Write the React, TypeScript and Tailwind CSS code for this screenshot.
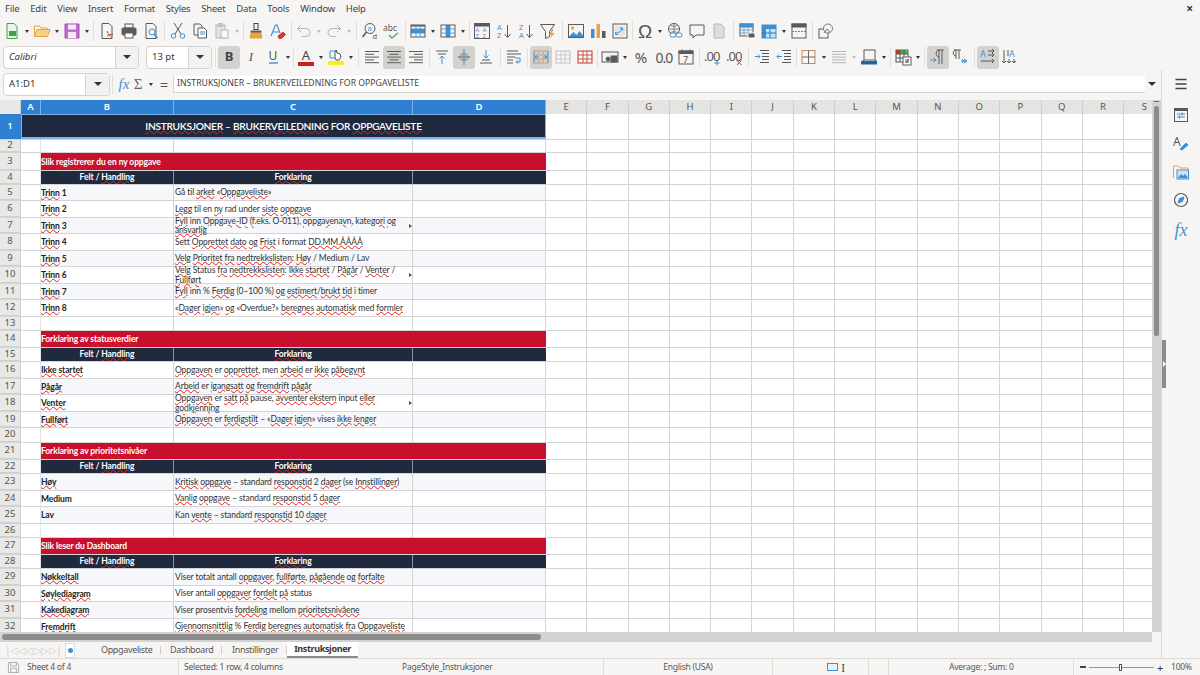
import type { ReactNode } from 'react';

const BLUE = '#3f8fd2';
const GREY = '#5a5a5a';
const RED = '#d9382e';
const ORANGE = '#e8a33d';

function Ico({ children, size = 18 }: { children: ReactNode; size?: number }) {
  return (
    <svg width={size} height={size} viewBox="0 0 18 18" fill="none" stroke={GREY} strokeWidth="1">
      {children}
    </svg>
  );
}

function Tool({ children, active, dim }: { children: ReactNode; active?: boolean; dim?: boolean }) {
  return (
    <div className={`w-[22px] h-[23px] flex items-center justify-center rounded-[3px] shrink-0 ${active ? 'bg-[#d4d2cf]' : ''} ${dim ? 'opacity-40' : ''}`}>
      {children}
    </div>
  );
}

function Caret({ dim }: { dim?: boolean }) {
  return (
    <div className="w-[8px] h-[23px] flex items-center justify-center shrink-0">
      <div className={`border-t-[3px] border-x-[2.5px] border-x-transparent ${dim ? 'border-t-[#bbbbbb]' : 'border-t-[#333333]'}`} />
    </div>
  );
}

function Sep({ w }: { w: string }) {
  return (
    <div className={`${w} h-[20px] flex justify-center shrink-0`}>
      <div className="w-px h-full bg-[#e2e0dd]" />
    </div>
  );
}

const GridIcon = ({ fill, stroke = BLUE }: { fill?: 'row' | 'col'; stroke?: string }) => (
  <Ico>
    {fill === 'row' && <rect x="2" y="7" width="14" height="4" fill={stroke} stroke="none" />}
    {fill === 'col' && <rect x="7" y="3" width="4" height="12" fill={stroke} stroke="none" />}
    <rect x="2" y="3" width="14" height="12" stroke={fill ? GREY : stroke} />
    {fill === 'row' && <rect x="2" y="3" width="14" height="1.5" fill={GREY} stroke="none" />}
    <path d="M2 7h14M2 11h14M7 3v12M11 3v12" stroke={stroke} strokeWidth=".8" />
  </Ico>
);

const Lines = ({ rows }: { rows: [number, number][] }) => (
  <Ico>
    {rows.map(([x, w], i) => (
      <path key={i} d={`M${x} ${3.5 + i * 2.8}h${w}`} stroke={GREY} />
    ))}
  </Ico>
);

const Toolbar1 = () => (
  <div className="h-[26px] flex items-center pl-px">
    <Tool><Ico><path d="M4 1.5h7l3 3v12H4z" stroke="#43a047" fill="#eaf5ea" /><rect x="6" y="9" width="7" height="5" fill="#43a047" stroke="none" /></Ico></Tool>
    <Caret />
    <Tool><Ico><path d="M1.5 14.5V4h5l1.5 2h6v2" stroke={ORANGE} /><path d="M1.5 14.5l2.5-7h13l-2.5 7z" fill="#f6cf8c" stroke={ORANGE} /></Ico></Tool>
    <Caret />
    <Tool><Ico><path d="M2 2h14v14H2z" fill="#c06fce" stroke="#a24fb2" /><rect x="5" y="2.5" width="8" height="5" fill="#f6e8f8" stroke="none" /><rect x="5" y="10" width="8" height="6" fill="#f6e8f8" stroke="none" /></Ico></Tool>
    <Caret />
    <Sep w="w-[5px]" />
    <Tool><Ico><path d="M4 1.5h7l3 3v12H4z" /><path d="M9 9c1 3 3 5 5 6M9 14c2-1 4-2 6-2" stroke={RED} /></Ico></Tool>
    <Tool><Ico><rect x="5" y="2" width="8" height="4" /><rect x="2" y="6" width="14" height="7" rx="1" fill={GREY} /><rect x="5" y="11" width="8" height="5" fill="#fff" /></Ico></Tool>
    <Tool><Ico><path d="M4 1.5h7l3 3v12H4z" /><circle cx="10" cy="10" r="3" stroke={BLUE} /><path d="M12 12l3.5 4" stroke={BLUE} strokeWidth="1.5" /></Ico></Tool>
    <Sep w="w-[5px]" />
    <Tool><Ico><path d="M5 1l7 11M13 1L6 12" /><circle cx="4.5" cy="14" r="2.3" stroke={BLUE} /><circle cx="13.5" cy="14" r="2.3" stroke={BLUE} /></Ico></Tool>
    <Tool><Ico><path d="M3 2h6l2 2v9H3z" /><path d="M7 6h6l2.5 2v8H7z" fill="#fff" /><path d="M9 10h5M9 12h5" stroke={BLUE} /></Ico></Tool>
    <Tool dim><Ico><rect x="3" y="3" width="9" height="13" fill="#ccc" /><rect x="6" y="1.5" width="3" height="3" /><rect x="8" y="8" width="7" height="8" fill="#fff" /></Ico></Tool>
    <Caret dim />
    <Sep w="w-[4px]" />
    <Tool><Ico><rect x="7" y="1.5" width="4" height="6" stroke="#444" /><path d="M4 9h10v1.5H4z" fill="#666" /><path d="M4 11h10l1 5H3z" fill={ORANGE} stroke={ORANGE} /></Ico></Tool>
    <Tool><Ico><path d="M2 14L6.5 3h1.5l3 8M4 10h6" stroke={BLUE} strokeWidth="1.2" /><path d="M9 14l5-4 2.5 2.5-4 4H10z" fill={RED} stroke={RED} /></Ico></Tool>
    <Sep w="w-[4px]" />
    <Tool dim><Ico><path d="M6 3L2.5 6.5 6 10" /><path d="M3 6.5h8a4 4 0 010 8H7" /></Ico></Tool>
    <Caret dim />
    <Tool dim><Ico><path d="M12 3l3.5 3.5L12 10" /><path d="M15 6.5H7a4 4 0 000 8h4" /></Ico></Tool>
    <Caret dim />
    <Sep w="w-[6px]" />
    <Tool><Ico><circle cx="9" cy="6.5" r="5" /><path d="M5.5 10L1.5 15" strokeWidth="1.6" /><text x="6.5" y="9" fontSize="7.5" fill={BLUE} stroke="none" fontFamily="Noto Sans">a</text><text x="11.5" y="17" fontSize="7.5" fill={GREY} stroke="none" fontFamily="Noto Sans">d</text></Ico></Tool>
    <Tool><Ico><text x="0" y="9" fontSize="8.5" fill={GREY} stroke="none" fontFamily="Noto Sans">abc</text><path d="M6 13l3 3 6-5" stroke="#4caf50" strokeWidth="1.4" /></Ico></Tool>
    <Sep w="w-[4px]" />
    <Tool><GridIcon fill="row" /></Tool>
    <Caret />
    <Tool><GridIcon fill="col" /></Tool>
    <Caret />
    <Sep w="w-[4px]" />
    <Tool><Ico><rect x="1.5" y="1.5" width="15" height="15" /><rect x="1.5" y="1.5" width="15" height="2.5" fill={GREY} /><text x="2.5" y="10" fontSize="6" fill="#b65fc4" stroke="none" fontFamily="Noto Sans">A</text><text x="9.5" y="10" fontSize="6" fill={BLUE} stroke="none" fontFamily="Noto Sans">A</text><text x="2.5" y="16" fontSize="6" fill={BLUE} stroke="none" fontFamily="Noto Sans">Z</text><text x="9.5" y="16" fontSize="6" fill="#b65fc4" stroke="none" fontFamily="Noto Sans">Z</text></Ico></Tool>
    <Tool><Ico><text x="2" y="8" fontSize="7.5" fill={BLUE} stroke="none" fontFamily="Noto Sans">A</text><text x="2" y="16" fontSize="7.5" fill="#b65fc4" stroke="none" fontFamily="Noto Sans">Z</text><path d="M12.5 3v12M9.5 12l3 3.5 3-3.5" /></Ico></Tool>
    <Tool><Ico><text x="2" y="8" fontSize="7.5" fill="#b65fc4" stroke="none" fontFamily="Noto Sans">Z</text><text x="2" y="16" fontSize="7.5" fill={BLUE} stroke="none" fontFamily="Noto Sans">A</text><path d="M12.5 3v12M9.5 12l3 3.5 3-3.5" /></Ico></Tool>
    <Tool><Ico><path d="M1.5 2.5h14l-5 7v5l-4 2v-7z" /><path d="M13 7l-3 6h2.5L11 17l4.5-6H13l1.5-4z" fill={ORANGE} stroke="none" /></Ico></Tool>
    <Sep w="w-[6px]" />
    <Tool><Ico><rect x="1.5" y="2.5" width="15" height="13" /><circle cx="5.5" cy="6" r="1.7" fill={ORANGE} stroke="none" /><path d="M1.5 15l5-5 3 3 3-4 4 5v1z" fill={BLUE} stroke="none" /></Ico></Tool>
    <Tool><Ico><rect x="2" y="7" width="3.5" height="9" fill={BLUE} stroke="none" /><rect x="7.5" y="2" width="3.5" height="14" fill={ORANGE} stroke="none" /><rect x="13" y="9" width="3.5" height="7" fill={GREY} stroke="none" /></Ico></Tool>
    <Tool><Ico><rect x="2" y="2" width="14" height="14" /><rect x="4" y="4" width="10" height="10" fill="#e4e4e4" stroke="none" /><path d="M5 11c3 0 5-2 6-5M9 6h2.5v2.5M7 12.5H4.5V10" stroke={BLUE} /></Ico></Tool>
    <Sep w="w-[3px]" />
    <Tool><span className="text-[19px] leading-none text-[#555555] font-['Liberation_Sans',sans-serif]">Ω</span></Tool>
    <Caret />
    <Tool><Ico><circle cx="8" cy="7" r="5.5" /><path d="M2.5 7h11M8 1.5v11M4.5 3.5c2 1 5 1 7 0M4.5 10.5c2-1 5-1 7 0" strokeWidth=".7" /><rect x="4" y="11" width="6" height="4" rx="2" stroke={BLUE} fill="#fff" /><rect x="10" y="11" width="6" height="4" rx="2" stroke={BLUE} fill="#fff" /></Ico></Tool>
    <Tool><Ico><path d="M2 3h14v10H8l-3 3v-3H2z" /></Ico></Tool>
    <Tool dim><Ico><path d="M4 2h7l3 3v11H4z" fill="#bbb" /></Ico></Tool>
    <Sep w="w-[6px]" />
    <Tool><Ico><rect x="2" y="2" width="13" height="12" /><rect x="2" y="2" width="13" height="3" fill={BLUE} stroke={BLUE} /><path d="M2 8h13M2 11h13M6 5v9M10 5v9" stroke={BLUE} strokeWidth=".7" /><rect x="10" y="11" width="7" height="5" rx="1" fill={GREY} stroke="#fff" /></Ico></Tool>
    <Tool><Ico><rect x="2" y="3" width="14" height="13" fill="#c9e1f3" stroke={BLUE} /><rect x="2" y="3" width="4" height="13" fill={BLUE} stroke="none" /><rect x="2" y="3" width="14" height="4" fill={BLUE} stroke="none" /><path d="M2 11h14M10 7v9" stroke="#277fb4" /></Ico></Tool>
    <Caret />
    <Tool><Ico><rect x="2" y="2" width="14" height="14" /><rect x="2" y="2" width="14" height="3" fill={GREY} /><path d="M2 9.5h14" stroke={BLUE} strokeDasharray="2 1" /></Ico></Tool>
    <Sep w="w-[5px]" />
    <Tool><Ico><rect x="2" y="7" width="9" height="9" /><circle cx="11" cy="6.5" r="4.5" stroke="#777" fill="#f6f5f4" /><path d="M7 11l3-4 3 3" stroke="#777" /></Ico></Tool>
  </div>
);

const Dropdown = ({ label, italic, w, btn }: { label: string; italic?: boolean; w: string; btn: string }) => (
  <div className={`${w} h-[23px] flex bg-white border border-[#d6d4d1] rounded-[4px] overflow-hidden shrink-0`}>
    <div className={`flex-1 flex items-center pl-[5px] text-[9.5px] text-[#333333] ${italic ? 'italic' : ''}`}>{label}</div>
    <div className={`${btn} flex items-center justify-center bg-[#f3f2f0] border-l border-[#d6d4d1]`}>
      <div className="border-t-[4px] border-x-[4px] border-x-transparent border-t-[#333333]" />
    </div>
  </div>
);

const Toolbar2 = () => (
  <div className="h-[26px] flex items-center pl-[3px]">
    <Dropdown label="Calibri" italic w="w-[136px]" btn="w-[23px]" />
    <div className="w-[7px]" />
    <Dropdown label="13 pt" w="w-[66px]" btn="w-[23px]" />
    <Sep w="w-[6px]" />
    <Tool active><span className="text-[13px] font-bold text-[#444444]">B</span></Tool>
    <Tool><span className="text-[13px] italic text-[#555555] font-['Liberation_Serif',serif]">I</span></Tool>
    <Tool><div className="flex flex-col items-center leading-none"><span className="text-[12px] text-[#555555] leading-[12px]">U</span><div className="w-[9px] h-[2px] bg-[#7aaedb]" /></div></Tool>
    <Caret />
    <Sep w="w-[3px]" />
    <Tool><div className="flex flex-col items-center"><span className="text-[13px] text-[#444444] leading-[13px]">A</span><div className="w-[16px] h-[4px] bg-[#c9211e]" /></div></Tool>
    <Caret />
    <Tool><Ico><path d="M3 3h7v7H3z" stroke={BLUE} /><path d="M8 10V4l1-2 1 3 3 1 1 3-2 3H9z" fill="#fff" stroke="#555" /><rect x="1" y="13" width="16" height="4" fill="#f5f01a" stroke="none" /></Ico></Tool>
    <Caret />
    <Sep w="w-[6px]" />
    <Tool><Lines rows={[[2, 14], [2, 9], [2, 14], [2, 9], [2, 14]]} /></Tool>
    <Tool active><Lines rows={[[2, 14], [4.5, 9], [2, 14], [4.5, 9], [2, 14]]} /></Tool>
    <Tool><Lines rows={[[2, 14], [7, 9], [2, 14], [7, 9], [2, 14]]} /></Tool>
    <Sep w="w-[4px]" />
    <Tool><Ico><path d="M3 3h12M5 6h8" /><path d="M9 16V8M6.5 10.5L9 8l2.5 2.5" stroke={BLUE} /></Ico></Tool>
    <Tool active><Ico><path d="M3 9h12" /><path d="M5 7h8M5 11h8" strokeWidth=".6" /><path d="M9 1v6M6.8 5L9 7l2.2-2M9 17v-6M6.8 13L9 11l2.2 2" stroke={BLUE} /></Ico></Tool>
    <Tool><Ico><path d="M3 15h12M5 12h8" /><path d="M9 2v8M6.5 7.5L9 10l2.5-2.5" stroke={BLUE} /></Ico></Tool>
    <Sep w="w-[6px]" />
    <Tool><Ico><path d="M2 3h11M2 6h14M2 9h8M2 12h6M2 15h6" /><path d="M10 10h5v4h-3M13 12.5L11 14l2 1.5" stroke={BLUE} /></Ico></Tool>
    <Sep w="w-[5px]" />
    <Tool active><Ico><path d="M2 3h14M2 15h14M2 7h14M2 11h14" stroke="#c8936e" strokeWidth=".8" /><path d="M7 3v4M11 3v4M7 11v4M11 11v4" stroke="#c8936e" strokeWidth=".8" /><path d="M3 9h4M5 7.5L3 9l2 1.5M15 9h-4M13 7.5L15 9l-2 1.5" stroke={BLUE} /><path d="M2 3v12M16 3v12" stroke={BLUE} /></Ico></Tool>
    <Tool dim><GridIcon stroke="#777" /></Tool>
    <Tool><GridIcon stroke="#c0392b" /></Tool>
    <Sep w="w-[3px]" />
    <Tool><Ico><rect x="1" y="4" width="16" height="10" /><circle cx="7" cy="11" r="2" fill={GREY} /><rect x="10" y="8" width="2.5" height="6" fill={GREY} /><rect x="13.5" y="8" width="2.5" height="6" fill={GREY} /></Ico></Tool>
    <Caret />
    <div className="w-px" />
    <Tool><span className="text-[15px] text-[#555555]">%</span></Tool>
    <div className="w-px" />
    <Tool><span className="text-[14px] tracking-[-1px] text-[#555555]">0.0</span></Tool>
    <Tool><Ico><rect x="2" y="3" width="14" height="13" /><path d="M2 3h14v2.5H2z" fill={GREY} /><path d="M5 1.5v3M13 1.5v3" /><text x="6" y="14.5" fontSize="9" fill={GREY} stroke="none" fontFamily="Noto Sans">7</text></Ico></Tool>
    <Sep w="w-[5px]" />
    <Tool><Ico><text x="0" y="13" fontSize="13" letterSpacing="-1" fill={GREY} stroke="none" fontFamily="Noto Sans">.00</text><path d="M13 12.5v5M10.5 15h5" stroke={BLUE} /></Ico></Tool>
    <Tool><Ico><text x="0" y="13" fontSize="13" letterSpacing="-1" fill={GREY} stroke="none" fontFamily="Noto Sans">.00</text><path d="M11 12.5l4.5 4.5M15.5 12.5L11 17" stroke={RED} /></Ico></Tool>
    <Sep w="w-[5px]" />
    <Tool><Ico><path d="M7 2.5h9M9 5.5h7M9 8.5h7M9 11.5h7M7 14.5h9" /><path d="M2 8.5h5M5 6.5l2 2-2 2" stroke={BLUE} /></Ico></Tool>
    <Tool><Ico><path d="M7 2.5h9M9 5.5h7M9 8.5h7M9 11.5h7M7 14.5h9" /><path d="M7 8.5H2M4 6.5l-2 2 2 2" stroke={BLUE} /></Ico></Tool>
    <Sep w="w-[3px]" />
    <Tool><Ico><rect x="2" y="2.5" width="13" height="13" stroke="#c88a5a" /><path d="M8.5 2.5v13M2 9h13" stroke="#666" /></Ico></Tool>
    <Caret />
    <Tool dim><Lines rows={[[2, 14], [2, 14], [2, 14], [2, 14], [2, 14]]} /></Tool>
    <Caret dim />
    <Tool><Ico><rect x="4" y="2" width="11" height="10" /><rect x="1" y="13" width="16" height="3.5" fill="#1f66a8" stroke="none" /><path d="M4 12l-2 1.5M15 12l2 1.5" stroke="#1f66a8" /></Ico></Tool>
    <Caret />
    <Sep w="w-[4px]" />
    <Tool><Ico><rect x="2" y="2" width="12" height="12" /><rect x="2" y="2" width="4" height="4" fill="#c0392b" stroke="none" /><rect x="6" y="2" width="8" height="4" fill="#4caf50" stroke="none" /><path d="M2 6h12M2 10h12M6 2v12M10 2v12" /><rect x="9" y="9" width="8" height="8" fill="#fff" /><path d="M11 12h4M11 14h4M14.5 11l-2 4" /></Ico></Tool>
    <Caret />
    <Sep w="w-[5px]" />
    <Tool active><Ico><path d="M8 2h7M10 2v14M13 2v14M10 9C6.5 9 6 2 10 2" /><path d="M1.5 12H7M4.5 9.5L7 12l-2.5 2.5" stroke={BLUE} /></Ico></Tool>
    <Tool><Ico><path d="M3 2h7M5 2v9M8 2v9M5 8C1.5 8 1 2 5 2" /><path d="M10 13h6M13 11l3 2-3 2M11 11l3 4M14 11l-3 4" stroke={BLUE} /></Ico></Tool>
    <Sep w="w-[6px]" />
    <Tool active><Ico><text x="1" y="9" fontSize="9" fill={BLUE} stroke="none" fontFamily="Noto Sans">A</text><path d="M9 3h6M13 1l2 2-2 2M9 7h6M13 5l2 2-2 2M2 13h13M13 11l2 2-2 2" /></Ico></Tool>
    <Tool><Ico><text x="8" y="9" fontSize="9" fill={BLUE} stroke="none" fontFamily="Noto Sans">A</text><path d="M3 2v13M1 13l2 2 2-2M8 11v4M6 13l2 2 2-2M13 11v4M11 13l2 2 2-2M7 2v6" /></Ico></Tool>
  </div>
);

const FormulaBar = () => (
  <div className="h-[30px] flex items-center pl-[3px] pb-[2px]">
    <Dropdown label="A1:D1" w="w-[107px]" btn="w-[24px]" />
    <Sep w="w-[5px]" />
    <div className="w-[18px] text-center text-[15px] italic text-[#4a90d0] font-['Liberation_Serif',serif] shrink-0">fx</div>
    <div className="w-[10px] text-center text-[15px] text-[#666666] font-['Liberation_Serif',serif] shrink-0">Σ</div>
    <div className="w-[4px]" />
    <Caret />
    <div className="w-[18px] text-center text-[15px] text-[#555555] shrink-0">=</div>
    <div className="w-[972px] h-[17px] flex items-center bg-white border-b border-l border-[#d6d4d1] pl-[3px] text-[8.7px] text-[#444444] shrink-0">
      INSTRUKSJONER – BRUKERVEILEDNING FOR OPPGAVELISTE
    </div>
    <div className="ml-[3px]"><div className="border-t-[4px] border-x-[4px] border-x-transparent border-t-[#333333]" /></div>
  </div>
);

// *word* gets the spell-check squiggle
function Squiggly({ text }: { text: string }) {
  return (
    <span>
      {text.split('*').map((part, i) =>
        i % 2 ? (
          <span key={i} className="underline decoration-wavy decoration-[#e2231a] decoration-[0.4px] underline-offset-0">{part}</span>
        ) : (
          <span key={i}>{part}</span>
        ),
      )}
    </span>
  );
}

const EXTRA = ['E', 'F', 'G', 'H', 'I', 'J', 'K', 'L', 'M', 'N', 'O', 'P', 'Q', 'R', 'S'];

const ExtraCells = () => (
  <>
    {EXTRA.map((c) => (
      <div key={c} className="w-[41.3px] shrink-0 border-r border-[#d4d4d4]" />
    ))}
  </>
);

const RowHead = ({ n, active }: { n: number; active?: boolean }) => (
  <div className={`w-[21px] shrink-0 flex items-center justify-center text-[9.5px] border-r border-b font-['Noto_Sans',sans-serif] ${active ? 'bg-[#2f7fd3] text-white font-semibold border-[#2f7fd3]' : 'bg-[#e8e8e6] text-[#555555] border-[#cfcfcd]'}`}>
    {n}
  </div>
);

type Row =
  | { n: number; h: string; kind: 'empty' }
  | { n: number; h: string; kind: 'band'; title: string }
  | { n: number; h: string; kind: 'head' }
  | { n: number; h: string; kind: 'data'; b: string; c: string; more?: boolean };

const ROWS: Row[] = [
  { n: 2, h: 'h-[13px]', kind: 'empty' },
  { n: 3, h: 'h-[18px]', kind: 'band', title: 'Slik *registrerer* du en ny *oppgave*' },
  { n: 4, h: 'h-[14px]', kind: 'head' },
  { n: 5, h: 'h-[16px]', kind: 'data', b: '*Trinn* 1', c: 'Gå til *arket* «*Oppgaveliste*»' },
  { n: 6, h: 'h-[17px]', kind: 'data', b: '*Trinn* 2', c: '*Legg* til en *ny* rad under *siste* *oppgave*' },
  { n: 7, h: 'h-[16px]', kind: 'data', b: '*Trinn* 3', c: '*Fyll* inn *Oppgave-ID* (*f.eks.* O-011), *oppgavenavn*, *kategori* *og*\n*ansvarlig*', more: true },
  { n: 8, h: 'h-[17px]', kind: 'data', b: '*Trinn* 4', c: 'Sett *Opprettet* *dato* *og* *Frist* i format *DD.MM.ÅÅÅÅ*' },
  { n: 9, h: 'h-[16px]', kind: 'data', b: '*Trinn* 5', c: '*Velg* *Prioritet* *fra* *nedtrekkslisten*: *Høy* / Medium / Lav' },
  { n: 10, h: 'h-[17px]', kind: 'data', b: '*Trinn* 6', c: '*Velg* Status *fra* *nedtrekkslisten*: *Ikke* *startet* / *Pågår* / *Venter* /\n*Fullført*', more: true },
  { n: 11, h: 'h-[16px]', kind: 'data', b: '*Trinn* 7', c: '*Fyll* inn % *Ferdig* (0–100 %) *og* *estimert*/*brukt* *tid* i timer' },
  { n: 12, h: 'h-[17px]', kind: 'data', b: '*Trinn* 8', c: '«*Dager* *igjen*» *og* «Overdue?» *beregnes* *automatisk* med *formler*' },
  { n: 13, h: 'h-[14px]', kind: 'empty' },
  { n: 14, h: 'h-[17px]', kind: 'band', title: 'Forklaring av *statusverdier*' },
  { n: 15, h: 'h-[14px]', kind: 'head' },
  { n: 16, h: 'h-[17px]', kind: 'data', b: '*Ikke* *startet*', c: '*Oppgaven* er *opprettet*, men *arbeid* er *ikke* *påbegynt*' },
  { n: 17, h: 'h-[16px]', kind: 'data', b: '*Pågår*', c: '*Arbeid* er *igangsatt* *og* *fremdrift* *pågår*' },
  { n: 18, h: 'h-[17px]', kind: 'data', b: '*Venter*', c: '*Oppgaven* er *satt* *på* pause, *avventer* *ekstern* input *eller*\n*godkjenning*', more: true },
  { n: 19, h: 'h-[16px]', kind: 'data', b: '*Fullført*', c: '*Oppgaven* er *ferdigstilt* – «*Dager* *igjen*» vises *ikke* *lenger*' },
  { n: 20, h: 'h-[15px]', kind: 'empty' },
  { n: 21, h: 'h-[17px]', kind: 'band', title: 'Forklaring av *prioritetsnivåer*' },
  { n: 22, h: 'h-[14px]', kind: 'head' },
  { n: 23, h: 'h-[17px]', kind: 'data', b: '*Høy*', c: '*Kritisk* *oppgave* – standard *responstid* 2 *dager* (se *Innstillinger*)' },
  { n: 24, h: 'h-[16px]', kind: 'data', b: 'Medium', c: '*Vanlig* *oppgave* – standard *responstid* 5 *dager*' },
  { n: 25, h: 'h-[17px]', kind: 'data', b: 'Lav', c: 'Kan *vente* – standard *responstid* 10 *dager*' },
  { n: 26, h: 'h-[14px]', kind: 'empty' },
  { n: 27, h: 'h-[17px]', kind: 'band', title: 'Slik leser du Dashboard' },
  { n: 28, h: 'h-[14px]', kind: 'head' },
  { n: 29, h: 'h-[17px]', kind: 'data', b: '*Nøkkeltall*', c: 'Viser totalt antall *oppgaver*, *fullførte*, *pågående* og *forfalte*' },
  { n: 30, h: 'h-[16px]', kind: 'data', b: '*Søylediagram*', c: 'Viser antall *oppgaver* *fordelt* *på* status' },
  { n: 31, h: 'h-[17px]', kind: 'data', b: '*Kakediagram*', c: 'Viser prosentvis *fordeling* mellom *prioritetsnivåene*' },
  { n: 32, h: 'h-[16px]', kind: 'data', b: '*Fremdrift*', c: '*Gjennomsnittlig* % *Ferdig* *beregnes* *automatisk* *fra* *Oppgaveliste*' },
];

function SheetRow({ row }: { row: Row }) {
  return (
    <div className={`${row.h} flex shrink-0 border-b border-[#d4d4d4] box-border`}>
      <RowHead n={row.n} />
      <div className="w-[20px] shrink-0 border-r border-[#e4e4e4]" />
      {row.kind === 'empty' && (
        <>
          <div className="w-[133px] shrink-0 border-r border-[#d4d4d4]" />
          <div className="w-[239px] shrink-0 border-r border-[#d4d4d4]" />
          <div className="w-[133px] shrink-0 border-r border-[#d4d4d4]" />
        </>
      )}
      {row.kind === 'band' && (
        <div className="w-[505px] shrink-0 flex items-center pt-px bg-[#c8102e] text-[8.5px] font-bold tracking-[-0.1px] text-white">
          <Squiggly text={row.title} />
        </div>
      )}
      {row.kind === 'head' && (
        <>
          <div className="w-[133px] shrink-0 flex items-center justify-center bg-[#1f2a3f] border-r border-[#8a93a3] text-[8.5px] font-bold tracking-[-0.1px] text-white"><Squiggly text="Felt / *Handling*" /></div>
          <div className="w-[239px] shrink-0 flex items-center justify-center bg-[#1f2a3f] border-r border-[#8a93a3] text-[8.5px] font-bold tracking-[-0.1px] text-white"><Squiggly text="*Forklaring*" /></div>
          <div className="w-[133px] shrink-0 bg-[#1f2a3f]" />
        </>
      )}
      {row.kind === 'data' && (
        <div className={`w-[505px] shrink-0 flex ${row.n % 2 ? 'bg-[#f5f7fa]' : 'bg-white'}`}>
          <div className="w-[133px] shrink-0 flex items-center pt-px border-r border-[#d4d4d4] text-[8.5px] font-bold tracking-[-0.1px] text-[#222222]">
            <Squiggly text={row.b} />
          </div>
          <div className="relative w-[239px] shrink-0 flex items-center pl-[1px] pt-px border-r border-[#d4d4d4] text-[8.5px] tracking-[-0.1px] text-[#333333]">
            <div className="whitespace-pre leading-[9.5px]"><Squiggly text={row.c} /></div>
            {row.more && <div className="absolute right-0 top-[5.5px] border-l-[3.5px] border-y-[2.5px] border-y-transparent border-l-[#6e3a3a]" />}
          </div>
          <div className="w-[133px] shrink-0 border-r border-[#d4d4d4]" />
        </div>
      )}
      <ExtraCells />
    </div>
  );
}

const ColHead = ({ w, label, active }: { w: string; label: string; active?: boolean }) => (
  <div className={`${w} shrink-0 flex items-center justify-center border-r text-[9.5px] ${active ? 'bg-[#2f7fd3] text-white font-semibold border-[#7fb2e6]' : 'bg-[#e4e4e2] text-[#555555] border-[#cfcfcd]'}`}>
    {label}
  </div>
);

const Sheet = () => (
  <div className="flex-1 flex min-h-0">
    <div className="w-[1152px] overflow-hidden flex flex-col bg-white font-['Lato',sans-serif]">
      <div className="h-[14px] flex shrink-0 font-['Noto_Sans',sans-serif]">
        <div className="w-[21px] shrink-0 bg-[#e8e8e6] border-r border-[#cfcfcd]" />
        <ColHead w="w-[20px]" label="A" active />
        <ColHead w="w-[133px]" label="B" active />
        <ColHead w="w-[239px]" label="C" active />
        <ColHead w="w-[133px]" label="D" active />
        {EXTRA.map((c) => (
          <ColHead key={c} w="w-[41.3px]" label={c} />
        ))}
      </div>
      <div className="h-[26px] flex shrink-0 border-b border-[#d4d4d4]">
        <RowHead n={1} active />
        <div className="w-[525px] shrink-0 flex items-center justify-center pt-[2px] bg-[#1f2a3f] border border-[#7fb2e6] border-b-2 text-[10.2px] font-semibold tracking-[-0.3px] text-white">
          <Squiggly text="*INSTRUKSJONER* – *BRUKERVEILEDNING* FOR *OPPGAVELISTE*" />
        </div>
        <ExtraCells />
      </div>
      {ROWS.map((row) => (
        <SheetRow key={row.n} row={row} />
      ))}
    </div>
    <div className="w-[9px] shrink-0 bg-[#d2d2d0] flex flex-col items-center pt-px">
      <div className="w-[5px] h-px bg-[#666666]" />
      <div className="w-[5px] h-[230px] mt-[4px] bg-[#8c8c8c] rounded-[2px]" />
    </div>
  </div>
);

const SideBar = () => (
  <div className="relative w-[39px] shrink-0 border-l border-[#dddbd8] flex flex-col items-center pt-[5px] gap-[10.5px]">
    <div className="h-[18px] flex items-center"><Ico size={18}><path d="M3.5 4.5h11M3.5 9h11M3.5 13.5h11" strokeWidth="1.5" stroke="#444" /></Ico></div>
    <div className="h-[18px] mt-[2px]"><Ico><rect x="2.5" y="2.5" width="13" height="13" /><path d="M2.5 2.5h13v2h-13z" fill={GREY} /><path d="M5 8h8M5 11h8M10 6.5v3M7.5 9.5v3" stroke={BLUE} /></Ico></div>
    <div className="h-[18px]"><Ico><text x="1" y="12" fontSize="12" fill={GREY} stroke="none" fontFamily="Noto Sans">A</text><path d="M8 15l6-6 2 2-6 5z" fill={BLUE} stroke={BLUE} /></Ico></div>
    <div className="h-[18px]"><Ico><path d="M1.5 15V3h5l1.5 2h8v2" stroke={ORANGE} /><rect x="5" y="7" width="11.5" height="9" fill="#cfe3f4" stroke={BLUE} /><path d="M6 15l3-4 2 2 2-2 3 4z" fill={BLUE} stroke="none" /></Ico></div>
    <div className="h-[18px]"><Ico><circle cx="9" cy="9" r="6.5" strokeWidth="1.2" /><path d="M12 6l-1.5 4.5L6 12l1.5-4.5z" fill={BLUE} stroke={BLUE} /></Ico></div>
    <div className="h-[18px] mt-px text-[18px] leading-[18px] italic text-[#4a90d0] font-['Liberation_Serif',serif]">fx</div>
    <div className="absolute left-0 top-[270px] w-[4px] h-[48px] bg-[#8c8c8c] flex items-center justify-center">
      <div className="border-l-[3px] border-y-[3px] border-y-transparent border-l-white" />
    </div>
  </div>
);

const TabBar = () => (
  <div className="h-[16px] flex items-center text-[9px] tracking-[-0.35px] text-[#555555]">
    <div className="w-[65px] pl-[5px] flex items-center text-[#d0cfcc] text-[10px] tracking-[-1px] shrink-0 overflow-hidden">|◁ ◁◁ ▷▷ ▷|</div>
    <div className="w-[10px] h-[15px] bg-white border border-[#dddddd] flex items-center justify-center shrink-0">
      <div className="w-[5px] h-[5px] rounded-full bg-[#3f8fd2]" />
    </div>
    <div className="w-[26px]" />
    <span className="w-[59px] shrink-0">Oppgaveliste</span>
    <div className="w-px h-[8px] bg-[#cccccc]" />
    <span className="w-[60px] pl-[9px] shrink-0">Dashboard</span>
    <div className="w-px h-[8px] bg-[#cccccc]" />
    <span className="w-[64px] pl-[10px] shrink-0">Innstillinger</span>
    <div className="w-px h-[8px] bg-[#cccccc]" />
    <div className="w-[71px] h-full flex items-center justify-center bg-white border-b-2 border-[#8a8a8a] font-bold text-[#333333] shrink-0">Instruksjoner</div>
  </div>
);

const StatusSep = ({ w }: { w: string }) => <div className={`${w} h-full border-r border-[#dfddda] shrink-0`} />;

const StatusBar = () => (
  <div className="h-[17px] flex items-center border-t border-[#dcdad7] text-[8.5px] tracking-[-0.25px] text-[#555555] shrink-0">
    <div className="w-[27px] flex justify-center shrink-0"><Ico size={13}><path d="M2 2h12l2 2v12H2z" stroke="#999" /><path d="M5 2v5h8V2M5 16v-6h8v6" stroke="#999" /></Ico></div>
    <div className="w-[151px] shrink-0">Sheet 4 of 4</div>
    <div className="w-[1px] h-full bg-[#dfddda]" />
    <div className="w-[223px] pl-[5px] shrink-0">Selected: 1 row, 4 columns</div>
    <div className="w-[201px] shrink-0">PageStyle_Instruksjoner</div>
    <StatusSep w="w-[1px]" />
    <div className="w-[168px] text-center shrink-0">English (USA)</div>
    <StatusSep w="w-[1px]" />
    <div className="w-[78px] flex items-center justify-end pr-[6px] gap-[3px] shrink-0">
      <div className="w-[11px] h-[8px] border border-[#3f8fd2] bg-[#e8f2fa]" />
      <div className="text-[13px] leading-none text-[#555555] font-['Liberation_Serif',serif]">I</div>
    </div>
    <StatusSep w="w-[18px]" />
    <StatusSep w="w-[20px]" />
    <div className="w-[184px] pl-[60px] shrink-0">Average: ; Sum: 0</div>
    <div className="w-px h-full bg-[#dfddda]" />
    <div className="flex items-center ml-[6px]">
      <div className="w-[6px] h-[1.5px] bg-[#444444]" />
      <div className="relative w-[65px] h-px mx-[3px] bg-[#999999]">
        <div className="absolute left-[30px] top-[-3px] w-[3px] h-[7px] border border-[#555555] bg-white" />
      </div>
      <span className="text-[11px] leading-none text-[#333333]">+</span>
    </div>
    <span className="ml-[8px]">100%</span>
  </div>
);

export default function App() {
  return (
    <div className="w-[1200px] h-[675px] flex flex-col overflow-hidden bg-[#f6f5f4] font-['Noto_Sans',sans-serif]">
      <div className="h-[18px] flex items-center pl-[5px] gap-[10.8px] text-[9.5px] tracking-[-0.2px] text-[#444444] shrink-0">
        <span>File</span>
        <span>Edit</span>
        <span>View</span>
        <span>Insert</span>
        <span>Format</span>
        <span>Styles</span>
        <span>Sheet</span>
        <span>Data</span>
        <span>Tools</span>
        <span>Window</span>
        <span>Help</span>
        <span className="ml-auto mr-[7px] text-[12px] font-bold text-[#333333]">×</span>
      </div>
      <Toolbar1 />
      <Toolbar2 />
      <div className="flex-1 flex min-h-0">
        <div className="w-[1161px] flex flex-col shrink-0">
          <FormulaBar />
          <Sheet />
          <div className="h-[10px] flex items-center bg-[#d2d2d0] w-[1152px] shrink-0">
            <div className="w-[539px] h-[6px] ml-[2px] rounded-[3px] bg-[#8c8c8c]" />
          </div>
          <TabBar />
        </div>
        <SideBar />
      </div>
      <StatusBar />
    </div>
  );
}
